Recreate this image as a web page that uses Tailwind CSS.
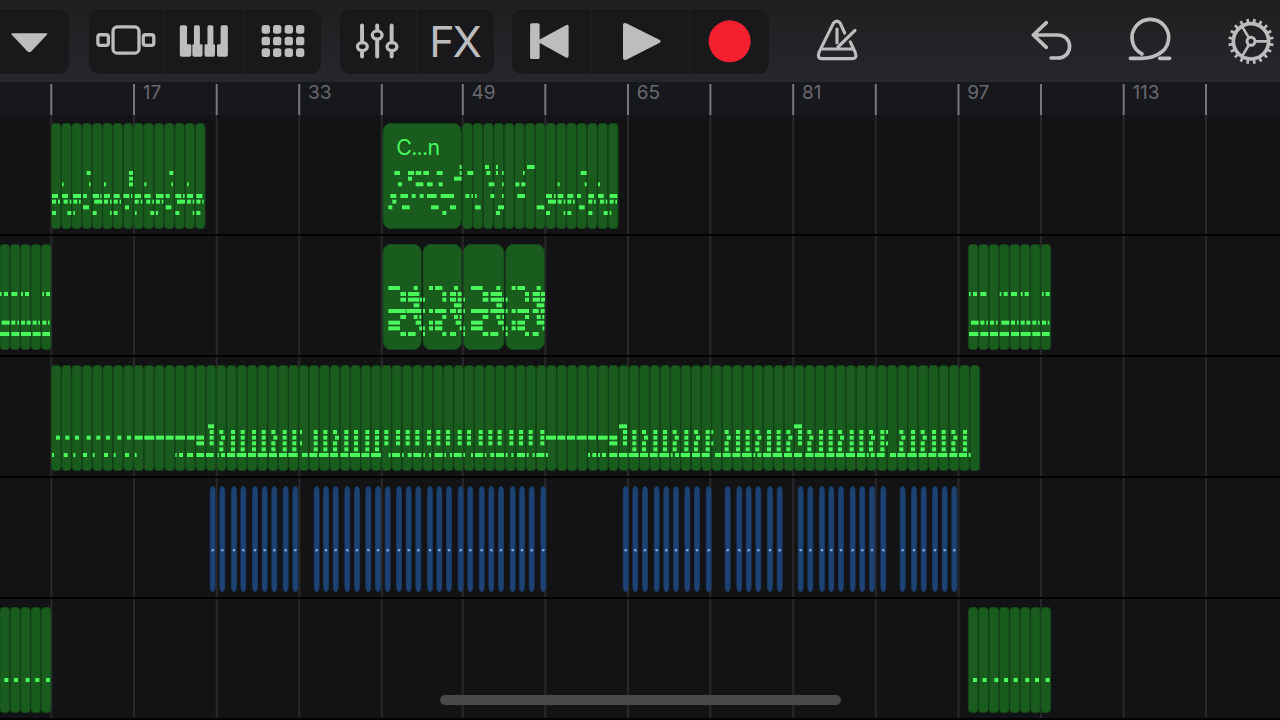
<!DOCTYPE html>
<html lang="en">
<head>
    <meta charset="UTF-8">
    <meta name="viewport" content="width=device-width, initial-scale=1.0">
    <title>Tracks</title>
    <script src="https://cdn.jsdelivr.net/npm/@tailwindcss/browser@4"></script>
</head>
<body class="bg-[#131315] font-['Inter',sans-serif]">
    <div class="relative w-[1280px] h-[720px] overflow-hidden flex flex-col">
        <!-- Toolbar -->
        <header class="h-[82px] shrink-0 flex items-start pt-[9px] bg-linear-to-b from-[#1f1f21] to-[#26272b] text-[#bdbcbf]">
            <div class="w-[69px] h-[65px] rounded-r-[10px] bg-[#19191b]">
                <svg class="w-full h-full" viewBox="0 27 207 195" fill="currentColor" stroke="currentColor" stroke-width="4" stroke-linejoin="round"><path d="M36 102H140L92 153Q88 156 84 153Z"/></svg>
            </div>
            <div class="ml-5 w-[232px] h-[65px] flex rounded-[10px] bg-[#19191b] divide-x divide-[#212124]">
                <button class="w-[76px]">
                    <svg class="w-full h-full" viewBox="266 27 228 195" fill="none" stroke="currentColor" stroke-width="10"><rect x="293" y="104" width="32" height="32" rx="7"/><rect x="339" y="80" width="79" height="80" rx="13"/><rect x="431" y="104" width="32" height="32" rx="7"/></svg>
                </button>
                <button class="w-[79px]">
                    <svg class="w-full h-full" viewBox="495 27 237 195" fill="currentColor"><path d="M545 75H557Q562 75 562 80V133H571Q575 133 575 137V165Q575 171 569 171H546Q540 171 540 165V80Q540 75 545 75Z"/><path d="M588 75H596Q601 75 601 80V133H605Q609 133 609 137V165Q609 171 603 171H584Q578 171 578 165V137Q578 133 582 133H583V80Q583 75 588 75Z"/><path d="M629 75H637Q642 75 642 80V133H643Q647 133 647 137V165Q647 171 641 171H621Q615 171 615 165V137Q615 133 619 133H624V80Q624 75 629 75Z"/><path d="M669 75H681Q686 75 686 80V165Q686 171 680 171H659Q653 171 653 165V137Q653 133 657 133H664V80Q664 75 669 75Z"/></svg>
                </button>
                <button class="w-[77px]">
                    <svg id="pads" class="w-full h-full" viewBox="732 27 231 195" fill="currentColor"></svg>
                </button>
            </div>
            <div class="ml-[19px] w-[154px] h-[65px] flex rounded-[10px] bg-[#19191b] divide-x divide-[#212124]">
                <button class="w-[77px]">
                    <svg class="w-full h-full" viewBox="29 27 231 195" fill="none" stroke="currentColor" stroke-width="12" stroke-linecap="round"><path d="M96 76V121M96 158V170M142 76V86M142 124V170M186 76V121M186 158V170"/><g stroke-width="10"><ellipse cx="97" cy="140" rx="15" ry="12.500"/><ellipse cx="142" cy="105" rx="15" ry="12.500"/><ellipse cx="187" cy="140" rx="15" ry="12.500"/></g></svg>
                </button>
                <button class="w-[77px] flex items-center justify-center pr-0.5 text-[43px] leading-none tracking-[-2px]">FX</button>
            </div>
            <div class="ml-[18px] w-[257px] h-[65px] flex rounded-[10px] bg-[#19191b] divide-x divide-[#212124]">
                <button class="w-20">
                    <svg class="w-full h-full" viewBox="545 27 240 195" fill="currentColor"><rect x="600" y="69" width="29" height="109" rx="5"/><path d="M628 119L709 75Q717 71 717 80V168Q717 177 709 173L628 128Q622 124 628 119Z"/></svg>
                </button>
                <button class="w-[98px]">
                    <svg class="w-full h-full" viewBox="785 27 294 195" fill="currentColor"><path d="M889 69L989 119Q997 124 989 129L889 180Q879 183 879 174V75Q879 66 889 69Z"/></svg>
                </button>
                <button class="w-[79px]">
                    <svg class="w-full h-full" viewBox="1080 27 237 195"><circle cx="1199" cy="124" r="63" fill="#f3202f"/></svg>
                </button>
            </div>
            <button class="ml-[43px] w-[50px] h-[65px]">
                <svg class="w-full h-full" viewBox="96 27 150 195" fill="none" stroke="currentColor" stroke-width="9.500" stroke-linecap="round" stroke-linejoin="round"><path d="M194 99L181 70Q171 57 160 70L118 155Q110 176 126 176H216Q232 176 226 158L211 126M126 147H219M225 91L174 141M171 87V128"/></svg>
            </button>
            <button class="ml-[164px] w-[50px] h-[65px]">
                <svg class="w-full h-full" viewBox="738 27 150 195" fill="none" stroke="currentColor" stroke-width="11" stroke-linecap="round" stroke-linejoin="round"><path d="M799 68L760 105L799 142M762 105H832C881 105 881 174 832 174H813"/></svg>
            </button>
            <button class="ml-[49px] w-[50px] h-[65px]">
                <svg class="w-full h-full" viewBox="1036 27 150 195" fill="none" stroke="currentColor" stroke-width="11" stroke-linecap="round"><path d="M1087 162A55 55 0 1 1 1137 162Q1115 175 1085 175H1052M1140 175H1170"/></svg>
            </button>
            <button class="ml-[51px] w-[50px] h-[65px]">
                <svg id="gear" class="w-full h-full" viewBox="1338 27 150 195" fill="none" stroke="currentColor"><circle cx="1413" cy="124" r="53" stroke-width="11"/><circle cx="1413" cy="124" r="12" stroke-width="9"/><path d="M1426 124H1465M1406 112L1386 79M1406 136L1386 169" stroke-width="8"/></svg>
            </button>
        </header>

        <!-- Bar ruler -->
        <div class="h-[33px] shrink-0 bg-[#17181c]">
            <svg id="ruler" class="w-full h-full" viewBox="0 0 1280 33" fill="#68696e" font-size="19"></svg>
        </div>

        <!-- Tracks -->
        <main class="relative grow">
            <svg id="grid" class="absolute inset-0 w-full h-full" fill="#29292c"></svg>
            <div id="tracks" class="relative flex flex-col"></div>
        </main>

        <div class="absolute left-[440px] top-[695px] w-[401px] h-[10px] rounded-full bg-[#49494b]"></div>
    </div>

    <script>
        // Track coordinates are in ticks, 3 ticks per pixel. A bare number is a 12 tick note.
        const WIDTH = 12;
        const green = { fill: '#195c1e', edge: '#134718', note: '#49f75d' };
        const blue = { fill: '#1d4375', edge: '#1a3b66', note: '#78a5dc' };

        const run = (x, end, n, r = 12) => Array.from({ length: n }, (_, i) => ({ x: x + (end - x) / n * i, w: (end - x) / n, r }));
        const strips = (dx, centers) => centers.map(c => ({ x: dx + c - 8.5, w: 17, r: 8 }));

        const stripsA = [38,67,102,130,165,194,223,257,286,350,378,407,442,471,505,534,563,597,626,655,690,718,747,782,811,845,874,903,938,966,995,1030];
        const stripsB = [47,76,105,140,169,198,232,261,296,353,388,416,445,480,509,572,601,636,664,693,728,757,786,820,878,912,941,975,1004,1033];

        const outroNotes = {
            144: [[27,5],39,[61,18],[119,5],131,[153,18],[182,6],194,[246,5],257],
            230: [[33,23],61,[79,5],90,[108,5],[124,24],153,[171,5],182,199,217,[234,5],246,[263,5]],
            264: [[27,28],[61,24],[90,24],[119,28],[153,24],[182,30],[217,24],[246,23]]
        };

        const colsA = [573,602,636,665,728,757,821,850,913,942];
        const colsB = [16,45,73,108,137,166,201,229,258,293,321,356,385,413,448,477,506,541];
        const colsC = [13,42,77,134,168,197,226,261,290,319,382,417,446,474,509,538,567,601,658,693,722,756,785,814,849];

        const tracks = [
            {
                color: green,
                regions: [...run(153, 616, 15), { x: 1148, w: 237, r: 25, label: 'C...n' }, ...run(1387, 1855, 15)],
                notes: [
                    { dx: 120, rows: {
                        144: [140,267,388],
                        161: [267],
                        178: [[66,5],[147,5],[192,6],267,[313,6],[394,5],[441,5]],
                        213: [[36,18],[66,18],[99,24],129,[158,19],[181,4],[192,18],[221,18],[250,18],[273,4],[284,19],[313,19],[348,23],377,[406,18],[429,5],[441,18],[469,18]],
                        230: [36,[54,6],71,[89,5],100,[117,5],[163,24],192,[210,5],221,[239,4],284,[302,5],319,[337,5],348,[365,5],[411,24],441,[458,5],469,[487,4]],
                        247: [[129,18],255,[377,17]],
                        264: [36,82,[100,5],158,[210,5],221,[285,5],331,[348,6],406,[458,5],469]
                    } },
                    { dx: 1125, rows: {
                        126: [[254,6],330,[363,6],[456,23]],
                        144: [[58,17],[99,18],[122,17],[145,17],[185,18],[254,6],[277,18],334,[363,6],[381,5],[444,5],[617,18]],
                        161: [99,[237,23]],
                        178: [69,[122,23],[156,17],191,[341,17],[381,5],421,439,[548,6],[629,6],[669,6]],
                        213: [[46,18],[76,23],110,134,[156,29],[197,40],271,[289,5],[300,5],346,[381,5],[427,23],[513,18],[537,5],[548,17],[577,18],606,[640,17],[669,17],[704,23]],
                        230: [52,[519,24],548,[566,5],577,[594,5],640,[657,5],675,[692,5],704,[721,5]],
                        247: [40,[81,23],[168,23],[225,18],[300,17],[369,18],[485,23],[612,17]],
                        264: [202,363,513,[566,5],577,640,686,[704,5]]
                    } }
                ]
            },
            {
                color: green,
                regions: [...run(-94, 154, 8), { x: 1148, w: 117, r: 25 }, { x: 1268, w: 118, r: 25 }, { x: 1389, w: 124, r: 25 }, { x: 1516, w: 118, r: 25 }, ...run(2904, 3153, 8)],
                notes: [
                    { dx: -119, rows: outroNotes },
                    { dx: 1125, rows: {
                        126: [[40,35],116,162,[180,22],237,[288,35],364,410,[427,23],485],
                        144: [[76,17],[99,34],202,[225,18],248,[323,17],[347,34],450,[473,22],498],
                        161: [[76,17],[99,34],[135,6],[144,6],202,[225,18],248,[265,5],[323,17],[347,34],[382,5],[392,6],450,[473,22],498],
                        178: [[116,17],[237,23],[364,17],[485,23]],
                        195: [[40,52],[94,45],[144,6],162,[180,34],[225,18],248,[265,5],[288,52],[346,42],[392,6],410,[427,35],[473,18],497],
                        213: [[76,17],116,[133,6],202,237,[254,6],[323,17],364,[382,5],450,485,[502,6]],
                        230: [[40,35],[122,17],162,[180,22],[242,17],[288,35],[369,17],410,[427,23],[485,23]],
                        247: [[40,35],[133,8],[144,6],162,[180,22],[254,6],[265,5],[288,35],[382,5],[392,6],410,[427,23],[502,6]],
                        264: [[76,17],[99,23],[144,6],202,[225,18],[265,5],[323,17],[346,24],[392,6],450,[473,18]]
                    } },
                    { dx: 2880, rows: outroNotes }
                ]
            },
            {
                color: green,
                regions: run(153, 2940, 90),
                notes: [
                    { dx: 120, rows: {
                        178: [[504,18]],
                        195: [509,538,694,[780,6],879,...colsA],
                        212: [48,76,105,140,169,198,232,261,[284,24],[313,30],[348,24],[377,24],[406,29],[441,23],[469,23],509,543,700,885,...colsA],
                        229: [[469,23],509,538,694,[780,6],879,...colsA],
                        247: [538,694,879,...colsA],
                        264: [[36,6],71,[100,6],129,[158,6],192,[221,6],255,[284,6],[406,4],417,[441,18],[469,23],[498,23],[533,4],543,[561,24],[590,29],[624,24],[653,29],[687,24],[717,24],[745,28],[786,17],[808,24],[837,29],[870,24],[901,24],[930,30]]
                    } },
                    { dx: 1080, rows: {
                        178: [[777,24]],
                        195: [...colsB,789,817,846,880,909,938],
                        212: [...colsB,[558,30],[592,24],[621,24],[650,30],[684,24],[714,29],[748,24],789,817,852,880,909,944],
                        229: [...colsB,[748,24],789,817,846,880,909,938],
                        247: [16,45,817,846,880,909,938],
                        264: [[4,24],[33,30],[86,6],[96,24],[126,5],143,[160,24],[190,5],[207,6],[224,24],[253,5],[270,6],[281,24],[310,5],[333,6],[345,24],[374,5],391,[408,24],[437,6],[454,6],[471,24],[500,6],[518,6],[529,24],[558,6],[684,6],697,[714,6],726,[748,24],[777,25],[806,30],[840,24],[869,24],[898,29],[932,6],945]
                    } },
                    { dx: 2040, rows: {
                        178: [[342,24]],
                        195: [...colsC,354,[94,6],[618,6]],
                        212: [13,48,77,140,168,197,232,261,290,325,354,388,417,446,480,509,538,573,601,664,693,728,756,785,820,849],
                        229: [...colsC,354,[94,6],[618,6]],
                        247: colsC,
                        264: [[2,28],[36,24],[65,24],[105,18],[128,24],[157,24],[186,29],[220,6],232,[249,24],[278,28],[312,24],[342,24],[376,24],[404,29],[439,24],[468,24],[497,28],[531,24],[560,6],572,[590,24],[630,18],[652,24],[682,28],[716,24],[745,24],[774,28],[808,24],[837,24],[866,6]]
                    } }
                ]
            },
            {
                color: blue,
                size: 7,
                regions: [...strips(600, stripsA), ...strips(1830, stripsB)],
                notes: [
                    { dx: 596.5, rows: { 189: stripsA.map(x => [x, 7]) } },
                    { dx: 1826.5, rows: { 189: stripsB.map(x => [x, 7]) } }
                ]
            },
            {
                color: green,
                regions: [...run(-94, 154, 8), ...run(2904, 3153, 8)],
                notes: [
                    { dx: -2999, rows: { 213: [2919,2948,2983,3012,3041,3076,3105,3137] } },
                    { dx: 0, rows: { 213: [2919,2948,2983,3012,3041,3076,3105,3137] } }
                ]
            }
        ];

        function drawTrack(track) {
            const { fill, edge, note } = track.color;
            const size = track.size || WIDTH;
            let svg = '';
            for (const r of track.regions) {
                svg += `<rect x="${r.x + 1}" y="0.500" width="${r.w - 2}" height="317" rx="${r.r}" ry="${track.color === blue ? 16 : r.r}" fill="${fill}" stroke="${edge}" stroke-width="2.500"/>`;
                if (r.label) {
                    svg += `<text x="${r.x + 41}" y="96" font-size="64" textLength="131" fill="${note}">${r.label}</text>`;
                }
            }
            for (const group of track.notes) {
                for (const [y, notes] of Object.entries(group.rows)) {
                    for (const n of notes) {
                        const [x, w] = Array.isArray(n) ? n : [n, WIDTH];
                        svg += `<rect x="${x + group.dx}" y="${y}" width="${w}" height="${size}" fill="${note}"/>`;
                    }
                }
            }
            return `<div class="h-[121px] pt-2 border-b-2 border-[#020203]"><svg class="block w-full h-[106px]" viewBox="0 0 3840 318">${svg}</svg></div>`;
        }

        document.getElementById('tracks').innerHTML = tracks.map(drawTrack).join('');

        // One line every 8 bars, a number every 16
        const lines = [51.3, 134, 216.7, 299.2, 381.8, 462.8, 545.3, 628, 710.4, 793.2, 875.8, 958.5, 1041, 1123.7, 1206];
        let ruler = '', grid = '';
        lines.forEach((x, i) => {
            ruler += `<rect x="${x - 1}" y="2" width="2" height="31" fill="#77787c"/>`;
            if (i % 2) {
                ruler += `<text x="${x + 8.7}" y="17">${9 + i * 8}</text>`;
            }
            grid += `<rect x="${x - 1}" y="0" width="2" height="605"/>`;
        });
        document.getElementById('ruler').innerHTML = ruler;
        document.getElementById('grid').innerHTML = grid;

        let pads = '';
        for (const y of [75, 110, 145]) {
            for (const x of [785, 819, 854, 888]) {
                pads += `<rect x="${x}" y="${y}" width="25" height="26" rx="8"/>`;
            }
        }
        document.getElementById('pads').innerHTML = pads;

        let teeth = '';
        for (let i = 0; i < 20; i++) {
            teeth += `<path d="M1413 71V56" stroke-width="8" transform="rotate(${i * 18 + 9} 1413 124)"/>`;
        }
        document.getElementById('gear').innerHTML += teeth;
    </script>
</body>
</html>
